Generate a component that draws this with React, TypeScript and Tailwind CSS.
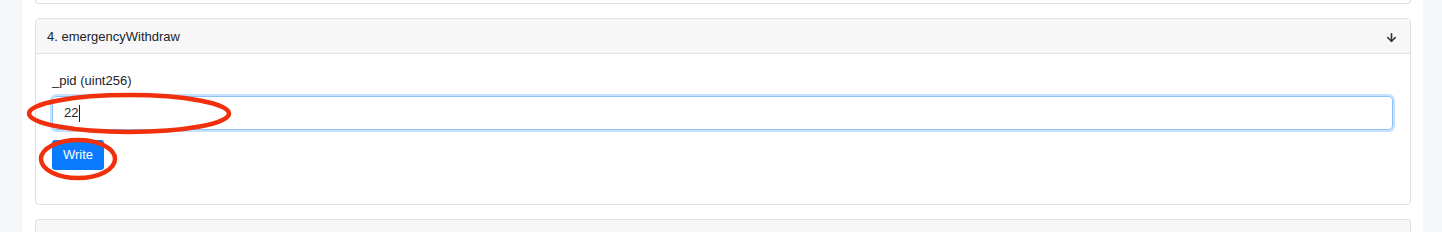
import { ArrowDown } from "lucide-react";
import { type FunctionComponent } from "react";

const font = { fontFamily: '"Liberation Sans", Arial, sans-serif' };

const Highlights: FunctionComponent = () => (
  <svg className="pointer-events-none absolute left-0 top-0" width="1442" height="232">
    <ellipse cx="129" cy="113.5" rx="100" ry="18.5" fill="none" stroke="#f0300d" strokeWidth="4.5" />
    <ellipse cx="78" cy="159" rx="37" ry="19" fill="none" stroke="#f0300d" strokeWidth="4.5" />
  </svg>
);

const App: FunctionComponent = () => {
  return (
    <div className="relative h-[232px] w-[1442px] overflow-hidden bg-[#f5f6f8] text-[#212529]" style={font}>
      <div className="ml-[22px] h-full w-[1401px] bg-white px-[13px]">
        <div className="h-[4px] w-[1376px] rounded-b-[4px] border-x border-b border-[#e0e0e0]" />
        <div className="mt-[14px] w-[1376px] rounded-[4px] border border-[#e0e0e0]">
          <div className="flex h-[35px] items-center justify-between border-b border-[#e0e0e0] bg-[#f7f7f8] pl-[11px] pr-[12px] pt-[2px] text-[13px]">
            <span>4. emergencyWithdraw</span>
            <ArrowDown size={13} strokeWidth={3} className="text-[#333]" />
          </div>
          <div className="pb-[34px] pl-[16px] pr-[17px] pt-[17px]">
            <label className="block text-[13px] leading-[19px]">_pid (uint256)</label>
            <div className="mt-[6px] flex h-[34px] items-center rounded-[4px] border border-[#8cc1fb] px-[11px] text-[13px] shadow-[0_0_0_2px_rgba(0,123,255,0.22)]">
              <span>22</span>
              <span className="ml-px h-[17px] w-px bg-[#222]" />
            </div>
            <button className="mt-[10px] flex h-[30px] w-[52px] items-center justify-center rounded-[3px] bg-[#0a7bff] text-[13px] text-white">
              Write
            </button>
          </div>
        </div>
        <div className="mt-[14px] h-[20px] w-[1376px] rounded-t-[4px] border-x border-t border-[#e0e0e0] bg-[#f7f7f8]" />
      </div>
      <Highlights />
    </div>
  );
};

export default App;
